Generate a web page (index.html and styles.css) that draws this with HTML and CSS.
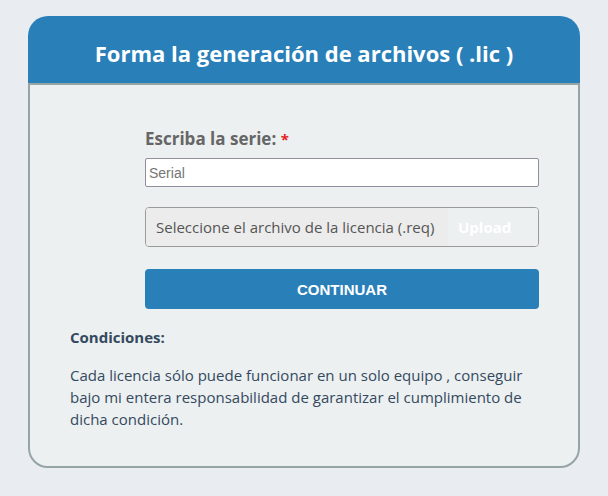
FILE: index.html
```html
<!DOCTYPE html>
<html lang="es">
<head>
<meta charset="utf-8">
<link rel="stylesheet" href="styles.css">
</head>
<body>
<div class="card">
  <div class="card-header">Forma la generación de archivos ( .lic )</div>
  <div class="card-body">
    <form class="form">
      <label class="label">Escriba la serie: <span class="req">*</span></label>
      <input class="serial" type="text" placeholder="Serial">
      <div class="file">
        <span class="file-name">Seleccione el archivo de la licencia (.req)</span>
        <span class="file-btn">Upload</span>
      </div>
      <button class="submit" type="button">CONTINUAR</button>
    </form>
    <div class="conditions">
      <h4 class="cond-title">Condiciones:</h4>
      <p class="cond-text">Cada licencia sólo puede funcionar en un solo equipo , conseguir bajo mi entera responsabilidad de garantizar el cumplimiento de dicha condición.</p>
    </div>
  </div>
</div>
</body>
</html>
```

FILE: styles.css
```css
html, body {
  margin: 0;
  padding: 0;
  background: #e9ecf0;
  font-family: "Open Sans", "Liberation Sans", sans-serif;
}
body {
  padding: 16px 28px 0 28px;
}
.card {
  width: 552px;
}
.card-header {
  background: #2980b9;
  color: #fff;
  font-weight: 700;
  font-size: 22px;
  text-align: center;
  height: 67px;
  line-height: 74px;
  border-radius: 20px 20px 0 0;
}
.card-body {
  background: #ecf0f1;
  border: 2px solid #95a5a6;
  border-radius: 0 0 20px 20px;
  height: 385px;
  box-sizing: border-box;
  padding: 0 40px 0 40px;
}
.form {
  margin: 0 0 0 75px;
  width: 394px;
  display: flex;
  flex-direction: column;
  padding-top: 43px;
}
.label {
  font-weight: 700;
  font-size: 17px;
  color: #666;
  line-height: 22px;
  height: 22px;
}
.req {
  color: #e81c1c;
  font-size: 15px;
}
.serial {
  margin-top: 8px;
  height: 29px;
  box-sizing: border-box;
  border: 1px solid #8f8f9d;
  border-radius: 2px;
  background: #fff;
  padding: 0 3px;
  font-family: "Liberation Sans", Arial, sans-serif;
  font-size: 14px;
  color: #333;
}
.serial::placeholder {
  color: #757575;
}
.file {
  margin-top: 20px;
  height: 40px;
  box-sizing: border-box;
  border: 1px solid #9a9a9a;
  border-radius: 4px;
  display: flex;
  overflow: hidden;
}
.file-name {
  background: #ececec;
  color: #555;
  font-size: 15px;
  line-height: 39px;
  padding: 0 10px;
  width: 302px;
  box-sizing: border-box;
  white-space: nowrap;
}
.file-btn {
  flex: 1;
  color: #fff;
  font-weight: 700;
  font-size: 15px;
  line-height: 39px;
  padding-left: 10px;
  background: #ecf0f1;
}
.submit {
  margin-top: 22px;
  height: 40px;
  border: none;
  border-radius: 4px;
  background: #2980b9;
  color: #fff;
  font-family: "Liberation Sans", Arial, sans-serif;
  font-weight: 700;
  font-size: 15px;
}
.conditions {
  color: #34495e;
}
.cond-title {
  margin: 18px 0 0 0;
  font-size: 15px;
  font-weight: 700;
  line-height: 20px;
}
.cond-text {
  margin: 17px 0 0 0;
  font-size: 15px;
  line-height: 22px;
}
```
